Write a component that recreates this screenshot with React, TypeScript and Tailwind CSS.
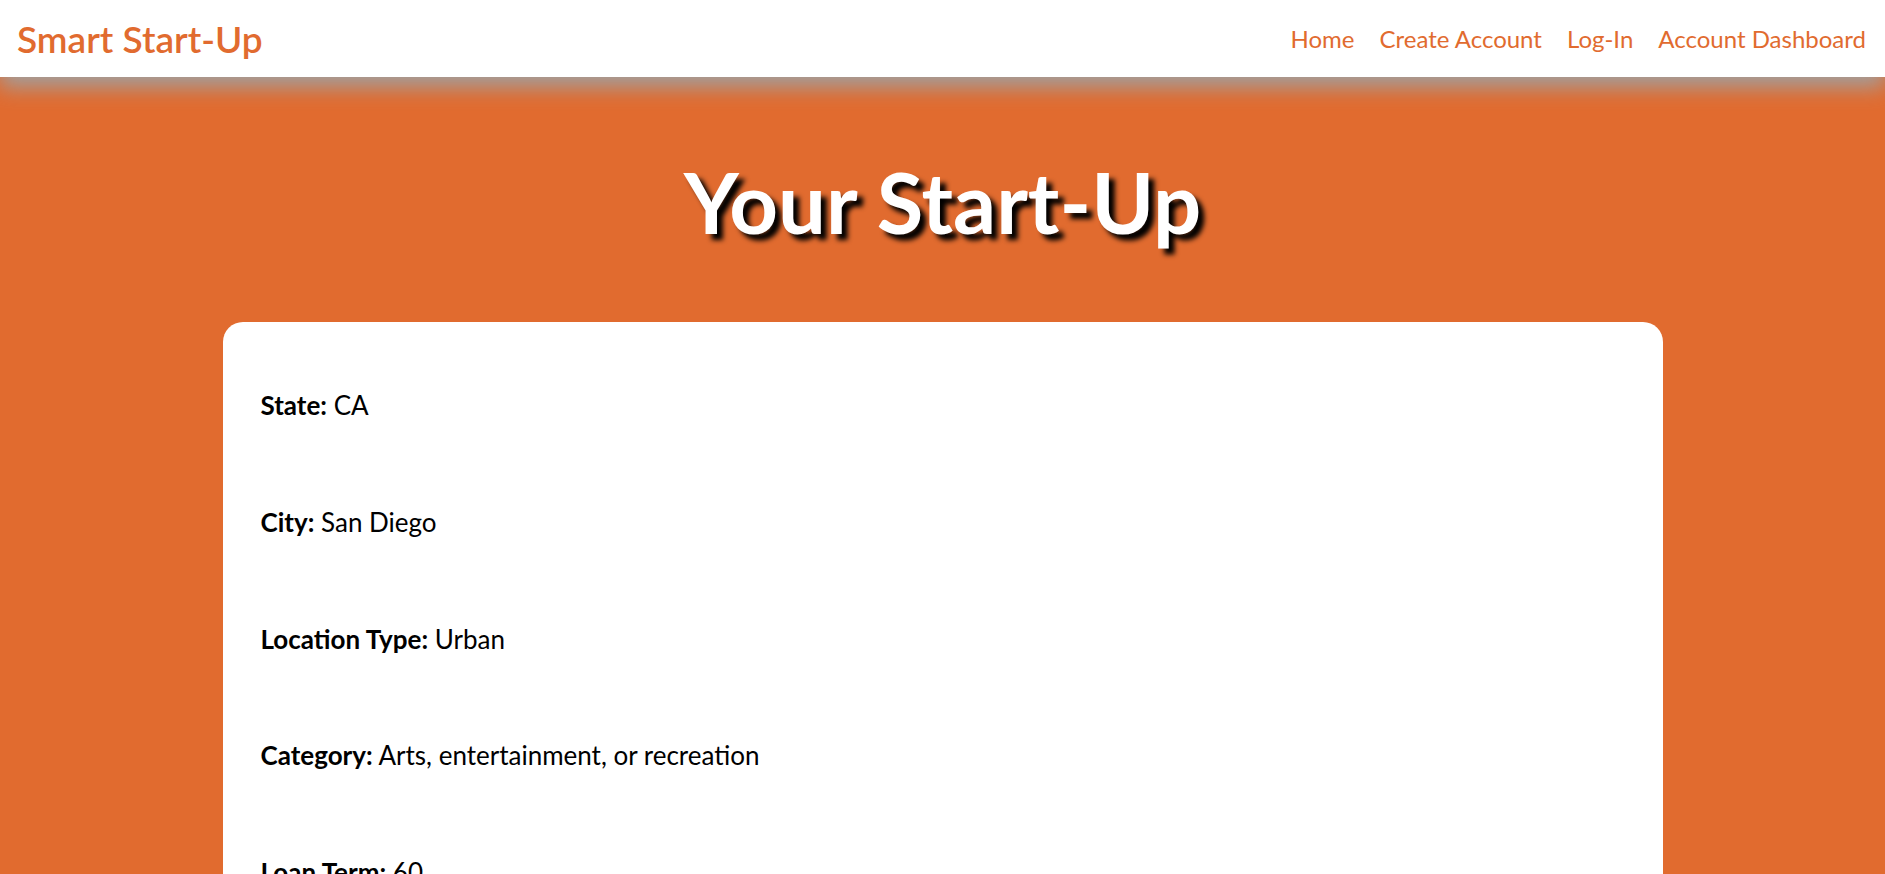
import React from "react";

const rows: { label: string; value: string }[] = [
  { label: "State:", value: "CA" },
  { label: "City:", value: "San Diego" },
  { label: "Location Type:", value: "Urban" },
  { label: "Category:", value: "Arts, entertainment, or recreation" },
  { label: "Loan Term:", value: "60" },
];

export default function App() {
  return (
    <div className="min-h-screen bg-[#e16b2f] font-['Lato','Noto_Sans',sans-serif]">
      <header className="relative z-10 flex h-[77px] items-center justify-between bg-white pl-[17px] pr-[19px] shadow-[0_10px_20px_#a0a0a0]">
        <a className="text-[37px] font-semibold leading-none text-[#e16b2f]">Smart Start-Up</a>
        <nav className="flex items-center gap-[25px] text-[24px] leading-none text-[#e16b2f]">
          <a>Home</a>
          <a>Create Account</a>
          <a>Log-In</a>
          <a>Account Dashboard</a>
        </nav>
      </header>
      <main className="flex flex-col items-center pt-[82px] pb-10">
        <h1 className="h-[84px] text-[85px] font-bold leading-none text-white [text-shadow:6px_6px_5px_#000]">
          Your Start-Up
        </h1>
        <section className="mt-[79px] w-[1440px] rounded-[20px] bg-white pl-[38px] pr-10 pt-[70px] pb-[80px]">
          <div className="flex flex-col gap-[90.8px]">
            {rows.map((r) => (
              <p key={r.label} className="text-[26px] leading-[26px] text-black">
                <b className="font-bold">{r.label}</b> {r.value}
              </p>
            ))}
          </div>
        </section>
      </main>
    </div>
  );
}
